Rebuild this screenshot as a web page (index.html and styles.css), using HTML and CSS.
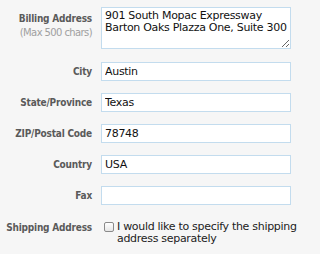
FILE: index.html
```
<!DOCTYPE html>
<html>
<head>
<meta charset="utf-8">
<link rel="stylesheet" href="styles.css">
</head>
<body>
<form class="form">
  <div class="row row-area">
    <label class="label">Billing Address<span class="hint">(Max 500 chars)</span></label>
    <textarea class="field area">901 South Mopac Expressway
Barton Oaks Plazza One, Suite 300</textarea>
  </div>
  <div class="row"><label class="label">City</label><input class="field" value="Austin"></div>
  <div class="row"><label class="label">State/Province</label><input class="field" value="Texas"></div>
  <div class="row"><label class="label">ZIP/Postal Code</label><input class="field" value="78748"></div>
  <div class="row"><label class="label">Country</label><input class="field" value="USA"></div>
  <div class="row"><label class="label">Fax</label><input class="field" value=""></div>
  <div class="row row-check">
    <label class="label">Shipping Address</label>
    <label class="check"><input type="checkbox" class="box"><span class="check-text">I would like to specify the shipping address separately</span></label>
  </div>
</form>
</body>
</html>
```
FILE: styles.css
```
html, body {
  margin: 0;
  padding: 0;
  background: #f6f6f6;
}
.form {
  display: flex;
  flex-direction: column;
  gap: 12px;
  padding-top: 7px;
  font-family: "DejaVu Sans", Verdana, sans-serif;
}
.row {
  display: grid;
  grid-template-columns: 92px 190px;
  column-gap: 9px;
  align-items: center;
}
.row-area {
  align-items: start;
  margin-bottom: 1px;
}
.label {
  text-align: right;
  font-family: "DejaVu Sans Condensed", "DejaVu Sans", Verdana, sans-serif;
  font-stretch: condensed;
  font-size: 10px;
  font-weight: bold;
  letter-spacing: -0.2px;
  color: #5a5a5a;
  white-space: nowrap;
}
.row-area .label {
  padding-top: 5px;
  line-height: 14px;
}
.hint {
  display: block;
  font-family: "DejaVu Sans", Verdana, sans-serif;
  font-stretch: normal;
  font-weight: normal;
  letter-spacing: -0.6px;
  color: #a0a0a0;
}
.field {
  box-sizing: border-box;
  width: 190px;
  height: 19px;
  margin: 0;
  padding: 0 3px;
  border: 1px solid #c3dcee;
  border-radius: 0;
  background: #fff;
  font-family: "DejaVu Sans", Verdana, sans-serif;
  font-size: 11px;
  letter-spacing: -0.3px;
  color: #111;
  outline: none;
}
.area {
  height: 42px;
  padding: 2px 3px;
  line-height: 12px;
  resize: both;
  overflow: hidden;
  display: block;
}
.row-check {
  align-items: start;
  margin-top: 4px;
}
.row-check .label {
  padding-top: 1px;
}
.check {
  display: flex;
  align-items: flex-start;
  gap: 3px;
  margin-left: 3px;
  width: 194px;
}
.box {
  appearance: none;
  -webkit-appearance: none;
  flex: none;
  width: 10px;
  height: 10px;
  margin: 1px 0 0;
  border: 1px solid #8a8a8a;
  border-radius: 2px;
  background: linear-gradient(#ffffff, #e6e6e6);
  box-sizing: border-box;
}
.check-text {
  font-size: 11px;
  line-height: 12px;
  letter-spacing: -0.3px;
  color: #222;
}
```
